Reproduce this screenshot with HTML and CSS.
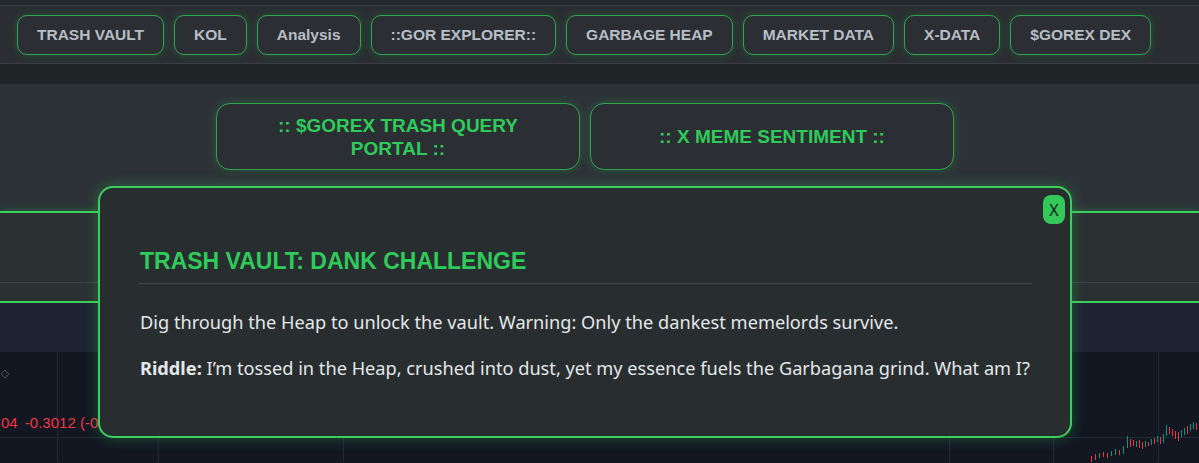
FILE: index.html
```html
<!DOCTYPE html>
<html lang="en">
<head>
  <meta charset="UTF-8">
  <meta name="viewport" content="width=device-width, initial-scale=1.0">
  <title>$GOREX Trash Vault</title>
  <link rel="stylesheet" href="styles.css">
</head>
<body>
  <div class="top-strip"></div>
  <nav class="nav">
    <button class="nav-btn">TRASH VAULT</button>
    <button class="nav-btn">KOL</button>
    <button class="nav-btn">Analysis</button>
    <button class="nav-btn">::GOR EXPLORER::</button>
    <button class="nav-btn">GARBAGE HEAP</button>
    <button class="nav-btn">MARKET DATA</button>
    <button class="nav-btn">X-DATA</button>
    <button class="nav-btn">$GOREX DEX</button>
  </nav>
  <div class="band"></div>
  <section class="portal">
    <button class="portal-btn">:: $GOREX TRASH QUERY PORTAL ::</button>
    <button class="portal-btn">:: X MEME SENTIMENT ::</button>
  </section>
  <div class="panel">
    <div class="panel-rule"></div>
  </div>
  <div class="chart">
    <div class="chart-toolbar"></div>
    <div class="chart-plot">
      <svg class="chart-grid" width="1199" height="110" viewBox="0 0 1199 110">
        <g stroke="#232838" stroke-width="1">
          <line x1="57.5" y1="0" x2="57.5" y2="110"/>
          <line x1="158.5" y1="0" x2="158.5" y2="110"/>
          <line x1="343.5" y1="0" x2="343.5" y2="110"/>
          <line x1="949.5" y1="0" x2="949.5" y2="110"/>
          <line x1="1053.5" y1="0" x2="1053.5" y2="110"/>
          <line x1="1158.5" y1="0" x2="1158.5" y2="110"/>
          <line x1="0" y1="85.5" x2="1199" y2="85.5"/>
        </g>
        <path d="M1 22 l4 -4 l4 4 l-4 4 z" fill="none" stroke="#4a5060" stroke-width="1"/>
      </svg>
      <div class="legend"><span class="legend-open">04</span> -0.3012 (-0.53%)</div>
      <svg class="candles" width="110" height="40" viewBox="0 0 110 40">
        <g stroke-width="1">
          <line x1="2.5" y1="34" x2="2.5" y2="40" stroke="#f23645"/>
          <line x1="6.5" y1="32" x2="6.5" y2="38" stroke="#f23645"/>
          <line x1="10.5" y1="31" x2="10.5" y2="36" stroke="#089981"/>
          <line x1="14.5" y1="30" x2="14.5" y2="35" stroke="#f23645"/>
          <line x1="18.5" y1="31" x2="18.5" y2="36" stroke="#f23645"/>
          <line x1="22.5" y1="29" x2="22.5" y2="34" stroke="#089981"/>
          <line x1="26.5" y1="27" x2="26.5" y2="33" stroke="#089981"/>
          <line x1="30.5" y1="28" x2="30.5" y2="33" stroke="#f23645"/>
          <line x1="34.5" y1="24" x2="34.5" y2="32" stroke="#089981"/>
          <line x1="38.5" y1="14" x2="38.5" y2="26" stroke="#089981"/>
          <line x1="41.5" y1="17" x2="41.5" y2="25" stroke="#f23645"/>
          <line x1="44.5" y1="18" x2="44.5" y2="24" stroke="#f23645"/>
          <line x1="47.5" y1="19" x2="47.5" y2="25" stroke="#089981"/>
          <line x1="50.5" y1="18" x2="50.5" y2="26" stroke="#f23645"/>
          <line x1="53.5" y1="20" x2="53.5" y2="27" stroke="#f23645"/>
          <line x1="56.5" y1="19" x2="56.5" y2="25" stroke="#089981"/>
          <line x1="59.5" y1="20" x2="59.5" y2="24" stroke="#f23645"/>
          <line x1="62.5" y1="17" x2="62.5" y2="23" stroke="#089981"/>
          <line x1="65.5" y1="16" x2="65.5" y2="22" stroke="#f23645"/>
          <line x1="68.5" y1="14" x2="68.5" y2="20" stroke="#089981"/>
          <line x1="71.5" y1="15" x2="71.5" y2="22" stroke="#f23645"/>
          <line x1="74.5" y1="12" x2="74.5" y2="21" stroke="#089981"/>
          <line x1="77.5" y1="3" x2="77.5" y2="14" stroke="#089981"/>
          <line x1="80.5" y1="5" x2="80.5" y2="12" stroke="#f23645"/>
          <line x1="83.5" y1="7" x2="83.5" y2="14" stroke="#f23645"/>
          <line x1="86.5" y1="9" x2="86.5" y2="17" stroke="#f23645"/>
          <line x1="89.5" y1="10" x2="89.5" y2="19" stroke="#f23645"/>
          <line x1="92.5" y1="8" x2="92.5" y2="15" stroke="#089981"/>
          <line x1="95.5" y1="6" x2="95.5" y2="13" stroke="#089981"/>
          <line x1="98.5" y1="4" x2="98.5" y2="12" stroke="#f23645"/>
          <line x1="101.5" y1="2" x2="101.5" y2="9" stroke="#089981"/>
          <line x1="104.5" y1="0" x2="104.5" y2="7" stroke="#089981"/>
          <line x1="107.5" y1="1" x2="107.5" y2="8" stroke="#f23645"/>
        </g>
      </svg>
    </div>
  </div>

  <div class="modal">
    <button class="modal-close">X</button>
    <h2 class="modal-title">TRASH VAULT: DANK CHALLENGE</h2>
    <p class="modal-text">Dig through the Heap to unlock the vault. Warning: Only the dankest memelords survive.</p>
    <p class="modal-text"><strong>Riddle:</strong> I’m tossed in the Heap, crushed into dust, yet my essence fuels the Garbagana grind. What am I?</p>
  </div>
</body>
</html>
```

FILE: styles.css
```css
html, body {
  width: 100%;
  height: 100%;
  overflow: hidden;
}

body {
  margin: 0;
  padding: 0;
  background-color: #131722;
  font-family: 'Liberation Sans', Arial, sans-serif;
}

.top-strip {
  height: 5px;
  background-color: #24292c;
  border-bottom: 1px solid #3a3f44;
}

.nav {
  display: flex;
  gap: 10px;
  height: 58px;
  box-sizing: border-box;
  padding: 9px 17px 0;
  background-color: #2a2e32;
  border-bottom: 1px solid #3b4045;
}

.nav-btn {
  height: 40px;
  padding: 0 19px;
  background-color: #2b2f34;
  color: #b8bec6;
  font-family: 'Liberation Sans', Arial, sans-serif;
  font-size: 15.5px;
  font-weight: bold;
  border: 1.5px solid #2fa64d;
  border-radius: 10px;
  box-shadow: 0 0 8px rgba(46, 204, 90, 0.22);
  cursor: pointer;
}

.band {
  height: 20px;
  background-color: #1f2426;
}

.portal {
  display: flex;
  gap: 10px;
  height: 127px;
  box-sizing: border-box;
  padding: 19px 0 0 216px;
  background-color: #2d3237;
}

.portal-btn {
  width: 364px;
  height: 67px;
  padding: 0 28px;
  background-color: #2b2f34;
  color: #2fcb5a;
  font-family: 'Liberation Sans', Arial, sans-serif;
  font-size: 19px;
  font-weight: bold;
  line-height: 23px;
  border: 1.5px solid #2fa64d;
  border-radius: 14px;
  box-shadow: 0 0 10px rgba(46, 204, 90, 0.25);
  cursor: pointer;
}

.panel {
  height: 92px;
  box-sizing: border-box;
  background-color: #2b3033;
  border-top: 2px solid #3ccf5e;
  border-bottom: 2px solid #3ccf5e;
  box-shadow: 0 0 8px rgba(46, 204, 90, 0.3);
  padding-top: 69px;
}

.panel-rule {
  height: 1px;
  background-color: #3c4246;
}

.chart-toolbar {
  height: 49px;
  background-color: #1e2432;
}

.chart-plot {
  position: relative;
  height: 110px;
  background-color: #131722;
}

.chart-grid {
  display: block;
}

.legend {
  position: absolute;
  top: 62px;
  left: 1px;
  color: #f23645;
  font-family: 'Liberation Sans', Arial, sans-serif;
  font-size: 15px;
}

.legend-open {
  margin-right: 3px;
}

.candles {
  position: absolute;
  right: 0;
  bottom: 0;
}

.modal {
  position: absolute;
  top: 186px;
  left: 98px;
  width: 974px;
  height: 252px;
  box-sizing: border-box;
  padding: 60px 38px 0;
  background-color: #282e30;
  border: 2px solid #3ccf5e;
  border-radius: 15px;
  box-shadow: 0 0 14px rgba(46, 204, 90, 0.35);
}

.modal-close {
  position: absolute;
  top: 7px;
  right: 5px;
  width: 22px;
  height: 29px;
  padding: 0;
  background-color: #34c759;
  color: #14201a;
  font-family: 'Noto Sans', sans-serif;
  font-size: 16px;
  border: none;
  border-radius: 8px;
  cursor: pointer;
}

.modal-title {
  margin: 0;
  padding: 0 2px 8px;
  color: #2fcb5a;
  font-family: 'Liberation Sans', Arial, sans-serif;
  font-size: 23px;
  font-weight: bold;
  border-bottom: 1px solid #41484b;
}

.modal-text {
  margin: 19px -12px 0 2px;
  color: #e4e7e9;
  font-family: 'Noto Sans', sans-serif;
  font-size: 18.2px;
  line-height: 27px;
  white-space: nowrap;
}

.modal-title + .modal-text {
  margin-top: 25px;
}

.modal-text strong {
  font-weight: bold;
}
```
